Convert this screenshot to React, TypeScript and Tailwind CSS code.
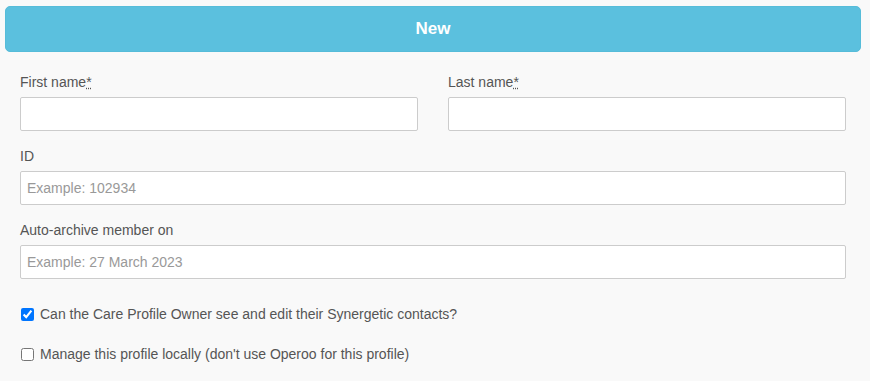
import React from "react";

function Label({ children, required }: { children: React.ReactNode; required?: boolean }) {
  return (
    <label className="block text-[14px] leading-[20px] text-[#555] mb-[5px]">
      {children}
      {required && (
        <abbr title="required" className="underline decoration-dotted">
          *
        </abbr>
      )}
    </label>
  );
}

function Input({ placeholder }: { placeholder?: string }) {
  return (
    <input
      type="text"
      placeholder={placeholder}
      className="block w-full h-[34px] bg-white border border-[#ccc] rounded-[2px] px-[6px] text-[14px] text-[#555] placeholder:text-[#999] outline-none"
    />
  );
}

export default function App() {
  return (
    <div
      className="w-[870px] h-[381px] bg-[#f9f9f9] overflow-hidden"
      style={{ fontFamily: '"Liberation Sans", Arial, sans-serif' }}
    >
      <div className="pt-[6px] pl-[5px] pr-[9px]">
        <div className="h-[46px] bg-[#5bc0de] rounded-[5px] border border-[#56bcd9] flex items-center justify-center">
          <span className="text-white font-bold text-[17px]">New</span>
        </div>
      </div>
      <div className="pl-[20px] pr-[24px] pt-[20px]">
        <div className="grid grid-cols-2 gap-[30px]">
          <div>
            <Label required>First name</Label>
            <Input />
          </div>
          <div>
            <Label required>Last name</Label>
            <Input />
          </div>
        </div>
        <div className="mt-[15px]">
          <Label>ID</Label>
          <Input placeholder="Example: 102934" />
        </div>
        <div className="mt-[15px]">
          <Label>Auto-archive member on</Label>
          <Input placeholder="Example: 27 March 2023" />
        </div>
        <div className="mt-[25px] flex items-center gap-[6px] text-[14px] text-[#555] h-[20px]">
          <input type="checkbox" defaultChecked className="w-[13px] h-[13px] m-0 ml-[1px] accent-[#0075ff]" />
          <span>Can the Care Profile Owner see and edit their Synergetic contacts?</span>
        </div>
        <div className="mt-[20px] flex items-center gap-[6px] text-[14px] text-[#555] h-[20px]">
          <input type="checkbox" className="w-[13px] h-[13px] m-0 ml-[1px]" />
          <span>Manage this profile locally (don't use Operoo for this profile)</span>
        </div>
      </div>
    </div>
  );
}
